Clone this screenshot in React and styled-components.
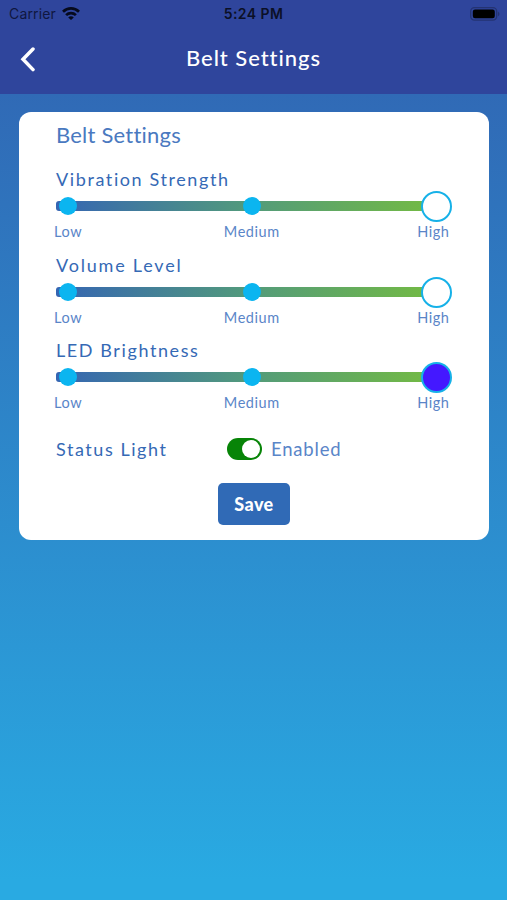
import React from "react";
import styled, { createGlobalStyle } from "styled-components";

const GlobalStyle = createGlobalStyle`
  * { box-sizing: border-box; }
  body { margin: 0; }
`;

const Screen = styled.div`
  height: 900px;
  width: 507px;
  display: flex;
  flex-direction: column;
  overflow: hidden;
  font-family: Lato, sans-serif;
  color: #3569b5;
  background: linear-gradient(180deg, #306ab6 94px, #29aae2 880px);
`;

const Header = styled.header`
  height: 94px;
  flex: none;
  background: #2f459c;
`;

const StatusBar = styled.div`
  height: 28px;
  display: grid;
  grid-template-columns: 1fr auto 1fr;
  align-items: center;
  padding: 0 7px 0 9px;
  font-family: Inter, sans-serif;
  font-size: 14px;
  line-height: 28px;
  color: #0b1026;
`;

const Carrier = styled.div`
  display: flex;
  align-items: center;
  gap: 6px;
  letter-spacing: 0.15px;
  color: #0f1740;
`;

const Clock = styled.div`
  font-weight: 600;
  letter-spacing: 0.45px;
  margin-left: -2px;
`;

const BatteryIcon = styled.svg`
  justify-self: end;
  display: block;
  margin-top: -1px;
`;

const NavBar = styled.div`
  height: 62px;
  display: grid;
  grid-template-columns: 60px 1fr 60px;
  align-items: center;
`;

const BackButton = styled.button`
  border: 0;
  padding: 0 0 0 20px;
  background: none;
  display: flex;
`;

const PageTitle = styled.h1`
  margin: -2px 0 0;
  text-align: center;
  font-family: Lato, sans-serif;
  font-size: 22px;
  font-weight: 500;
  line-height: 28px;
  letter-spacing: 0.95px;
  color: #fff;
`;

const Card = styled.main`
  margin: 18px 18px 0 19px;
  height: 428px;
  padding: 9px 37px 0;
  border-radius: 12px;
  background: #fff;
`;

const CardTitle = styled.h2`
  margin: 0 0 18px;
  font-size: 22px;
  font-weight: 400;
  line-height: 28px;
  letter-spacing: 0.22px;
  color: #4a79c0;
`;

const Field = styled.section`
  height: 85.5px;
`;

const FieldLabel = styled.div`
  font-size: 18px;
  line-height: 24px;
  letter-spacing: ${(p) => p.$spacing || "1.55px"};
`;

const Track = styled.div`
  position: relative;
  width: 381px;
  height: 10px;
  margin-top: 10px;
  border-radius: 3px;
  background: linear-gradient(90deg, #3565b3, #529a7c 50%, #74bb42);
`;

const Stop = styled.span`
  position: absolute;
  top: -4px;
  left: ${(p) => p.$left};
  width: 18px;
  height: 18px;
  border-radius: 50%;
  background: #0bb5f0;
`;

const Thumb = styled.span`
  position: absolute;
  top: -10px;
  right: -15px;
  width: 31px;
  height: 31px;
  border: 2.5px solid #16b1e8;
  border-radius: 50%;
  background: ${(p) => p.$fill};
`;

const Scale = styled.div`
  display: grid;
  grid-template-columns: 1fr auto 1fr;
  margin: 12px 0 0 -2px;
  width: 395.5px;
  font-size: 14.5px;
  line-height: 18px;
  letter-spacing: 0.55px;
  color: #5a85c8;
`;

const ScaleEnd = styled.span`
  text-align: right;
`;

const StatusRow = styled.div`
  display: flex;
  align-items: center;
  height: 28px;
  margin-top: 11.5px;
`;

const StatusName = styled(FieldLabel)`
  width: 171px;
`;

const Toggle = styled.button`
  width: 35px;
  height: 22px;
  padding: 2px;
  border: 0;
  border-radius: 11px;
  background: #078407;
  display: flex;
  justify-content: flex-end;
`;

const Knob = styled.span`
  width: 18px;
  height: 18px;
  border-radius: 50%;
  background: #fff;
`;

const ToggleText = styled.span`
  margin-left: 9px;
  font-size: 18.5px;
  letter-spacing: 0.8px;
  color: #5a85c8;
`;

const SaveButton = styled.button`
  display: block;
  width: 72px;
  height: 42px;
  margin: 20px 0 0 162px;
  padding: 0;
  border: 0;
  border-radius: 5px;
  background: #306ab6;
  font-family: Lato, sans-serif;
  font-size: 18px;
  font-weight: 900;
  letter-spacing: 0.4px;
  line-height: 42px;
  color: #fff;
`;

const sliders = [
  { name: "Vibration Strength", fill: "#fff", spacing: "1.6px" },
  { name: "Volume Level", fill: "#fff", spacing: "1.8px" },
  { name: "LED Brightness", fill: "#4418ff", spacing: "1.6px" },
];

export default function App() {
  return (
    <Screen>
      <GlobalStyle />
      <Header>
        <StatusBar>
          <Carrier>
            Carrier
            <svg width="18" height="14" viewBox="0 0 18 14" fill="none" stroke="#060a1c" strokeWidth="2.7">
              <path d="M1 4.8C5.6.3 12.4.3 17 4.8" />
              <path d="M4.1 8.1c2.8-2.7 7-2.7 9.8 0" />
              <path d="M9 13.1 6.2 10.4c1.6-1.5 4-1.5 5.6 0Z" fill="#060a1c" stroke="none" />
            </svg>
          </Carrier>
          <Clock>5:24 PM</Clock>
          <BatteryIcon width="30" height="14" viewBox="0 0 30 14">
            <rect x="0.7" y="0.7" width="26" height="12.4" rx="3.8" fill="none" stroke="#243372" strokeWidth="1.3" />
            <rect x="2.8" y="2.6" width="22" height="8.7" rx="2.2" fill="#000" />
            <path d="M28 4.5q3 2.4 0 4.8Z" fill="#243372" />
          </BatteryIcon>
        </StatusBar>
        <NavBar>
          <BackButton aria-label="Back">
            <svg width="16" height="26" viewBox="0 0 16 26" fill="none" stroke="#fff" strokeWidth="3.5" strokeLinecap="round">
              <path d="M13 3 3 13.3 13 23.6" />
            </svg>
          </BackButton>
          <PageTitle>Belt Settings</PageTitle>
        </NavBar>
      </Header>
      <Card>
        <CardTitle>Belt Settings</CardTitle>
        {sliders.map((s) => (
          <Field key={s.name}>
            <FieldLabel $spacing={s.spacing}>{s.name}</FieldLabel>
            <Track>
              <Stop $left="3px" />
              <Stop $left="187px" />
              <Thumb $fill={s.fill} />
            </Track>
            <Scale>
              <span>Low</span>
              <span>Medium</span>
              <ScaleEnd>High</ScaleEnd>
            </Scale>
          </Field>
        ))}
        <StatusRow>
          <StatusName>Status Light</StatusName>
          <Toggle aria-label="Status Light">
            <Knob />
          </Toggle>
          <ToggleText>Enabled</ToggleText>
        </StatusRow>
        <SaveButton>Save</SaveButton>
      </Card>
    </Screen>
  );
}
